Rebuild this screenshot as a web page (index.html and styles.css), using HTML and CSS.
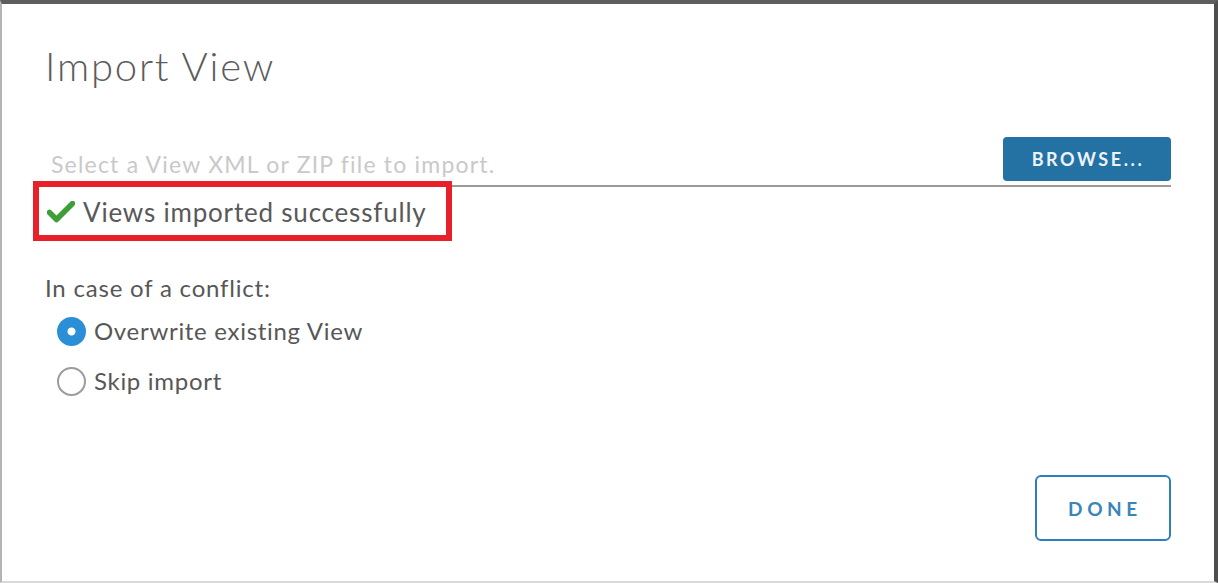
FILE: index.html
```html
<!DOCTYPE html>
<html lang="en">
<head>
<meta charset="utf-8">
<title>Import View</title>
<link rel="stylesheet" href="styles.css">
</head>
<body>
<div class="dialog">
  <h1 class="title">Import View</h1>
  <div class="file-row">
    <div class="placeholder">Select a View XML or ZIP file to import.</div>
    <button class="btn-browse">BROWSE...</button>
  </div>
  <div class="status">
    <svg class="check" width="28" height="22" viewBox="0 0 28 22">
      <path d="M2.5 11.5 L9.5 18.5 L25.5 2.5" fill="none" stroke="#3f9f37" stroke-width="5.5" stroke-linecap="round" stroke-linejoin="round"/>
    </svg>
    <span class="status-text">Views imported successfully</span>
    <span class="highlight"></span>
  </div>
  <div class="label">In case of a conflict:</div>
  <div class="radio-row">
    <span class="radio checked"></span>
    <span class="radio-label">Overwrite existing View</span>
  </div>
  <div class="radio-row">
    <span class="radio"></span>
    <span class="radio-label">Skip import</span>
  </div>
  <div class="footer">
    <button class="btn-done">DONE</button>
  </div>
</div>
</body>
</html>
```
FILE: styles.css
```css
html, body {
  margin: 0;
  padding: 0;
  background: #ffffff;
}
body {
  font-family: Lato, "Open Sans", sans-serif;
  color: #575757;
}
.dialog {
  box-sizing: border-box;
  width: 1218px;
  height: 583px;
  border-top: 4px solid #5e5e5e;
  border-left: 2px solid #b4b4b4;
  border-right: 4px solid #4e4e4e;
  border-bottom: 2px solid #d9d9d9;
  padding: 38px 43px 40px 43px;
  display: flex;
  flex-direction: column;
}
.title {
  margin: 0;
  font-size: 40px;
  line-height: 48px;
  font-weight: 300;
  letter-spacing: 1.8px;
  color: #5c5c5c;
}
.file-row {
  margin-top: 47px;
  display: flex;
  align-items: flex-end;
  justify-content: space-between;
  border-bottom: 2px solid #9a9a9a;
  height: 48px;
}
.placeholder {
  margin-left: 6px;
  font-size: 23px;
  line-height: 28px;
  letter-spacing: 1.2px;
  padding-bottom: 7px;
  color: #c9c9c9;
}
.btn-browse {
  align-self: flex-start;
  width: 168px;
  height: 44px;
  border: none;
  border-radius: 4px;
  background: #2472a4;
  color: #eef3f7;
  font-family: Lato, sans-serif;
  font-weight: 700;
  font-size: 18px;
  letter-spacing: 2.6px;
  padding: 0 0 0 2px;
}
.status {
  position: relative;
  margin-top: 9px;
  display: flex;
  align-items: center;
  height: 32px;
}
.check {
  margin-left: 2px;
  margin-right: 8px;
}
.status-text {
  font-size: 26px;
  line-height: 32px;
  letter-spacing: 0.8px;
  color: #595959;
}
.highlight {
  position: absolute;
  left: -12px;
  top: -15px;
  width: 407px;
  height: 48px;
  border: 6px solid #e8202a;
}
.label {
  margin-top: 45px;
  font-size: 24px;
  line-height: 30px;
  letter-spacing: 0.8px;
}
.label + .radio-row {
  margin-top: 3px;
}
.radio-row {
  display: flex;
  align-items: center;
  height: 50px;
}
.radio {
  box-sizing: border-box;
  width: 29px;
  height: 29px;
  margin-left: 12px;
  margin-right: 8px;
  border-radius: 50%;
  border: 2px solid #9c9c9c;
  background: #ffffff;
}
.radio.checked {
  border: none;
  background: radial-gradient(circle, #ffffff 0 3.5px, #2a8fd6 4.5px);
}
.radio-label {
  font-size: 24px;
  line-height: 30px;
  letter-spacing: 0.7px;
}
.footer {
  margin-top: auto;
  display: flex;
  justify-content: flex-end;
}
.btn-done {
  box-sizing: border-box;
  width: 136px;
  height: 66px;
  border: 2px solid #2f80b9;
  border-radius: 6px;
  background: #ffffff;
  color: #3a86b8;
  font-family: Lato, sans-serif;
  font-weight: 700;
  font-size: 19px;
  letter-spacing: 4.6px;
  padding: 0 0 0 4px;
}
```
